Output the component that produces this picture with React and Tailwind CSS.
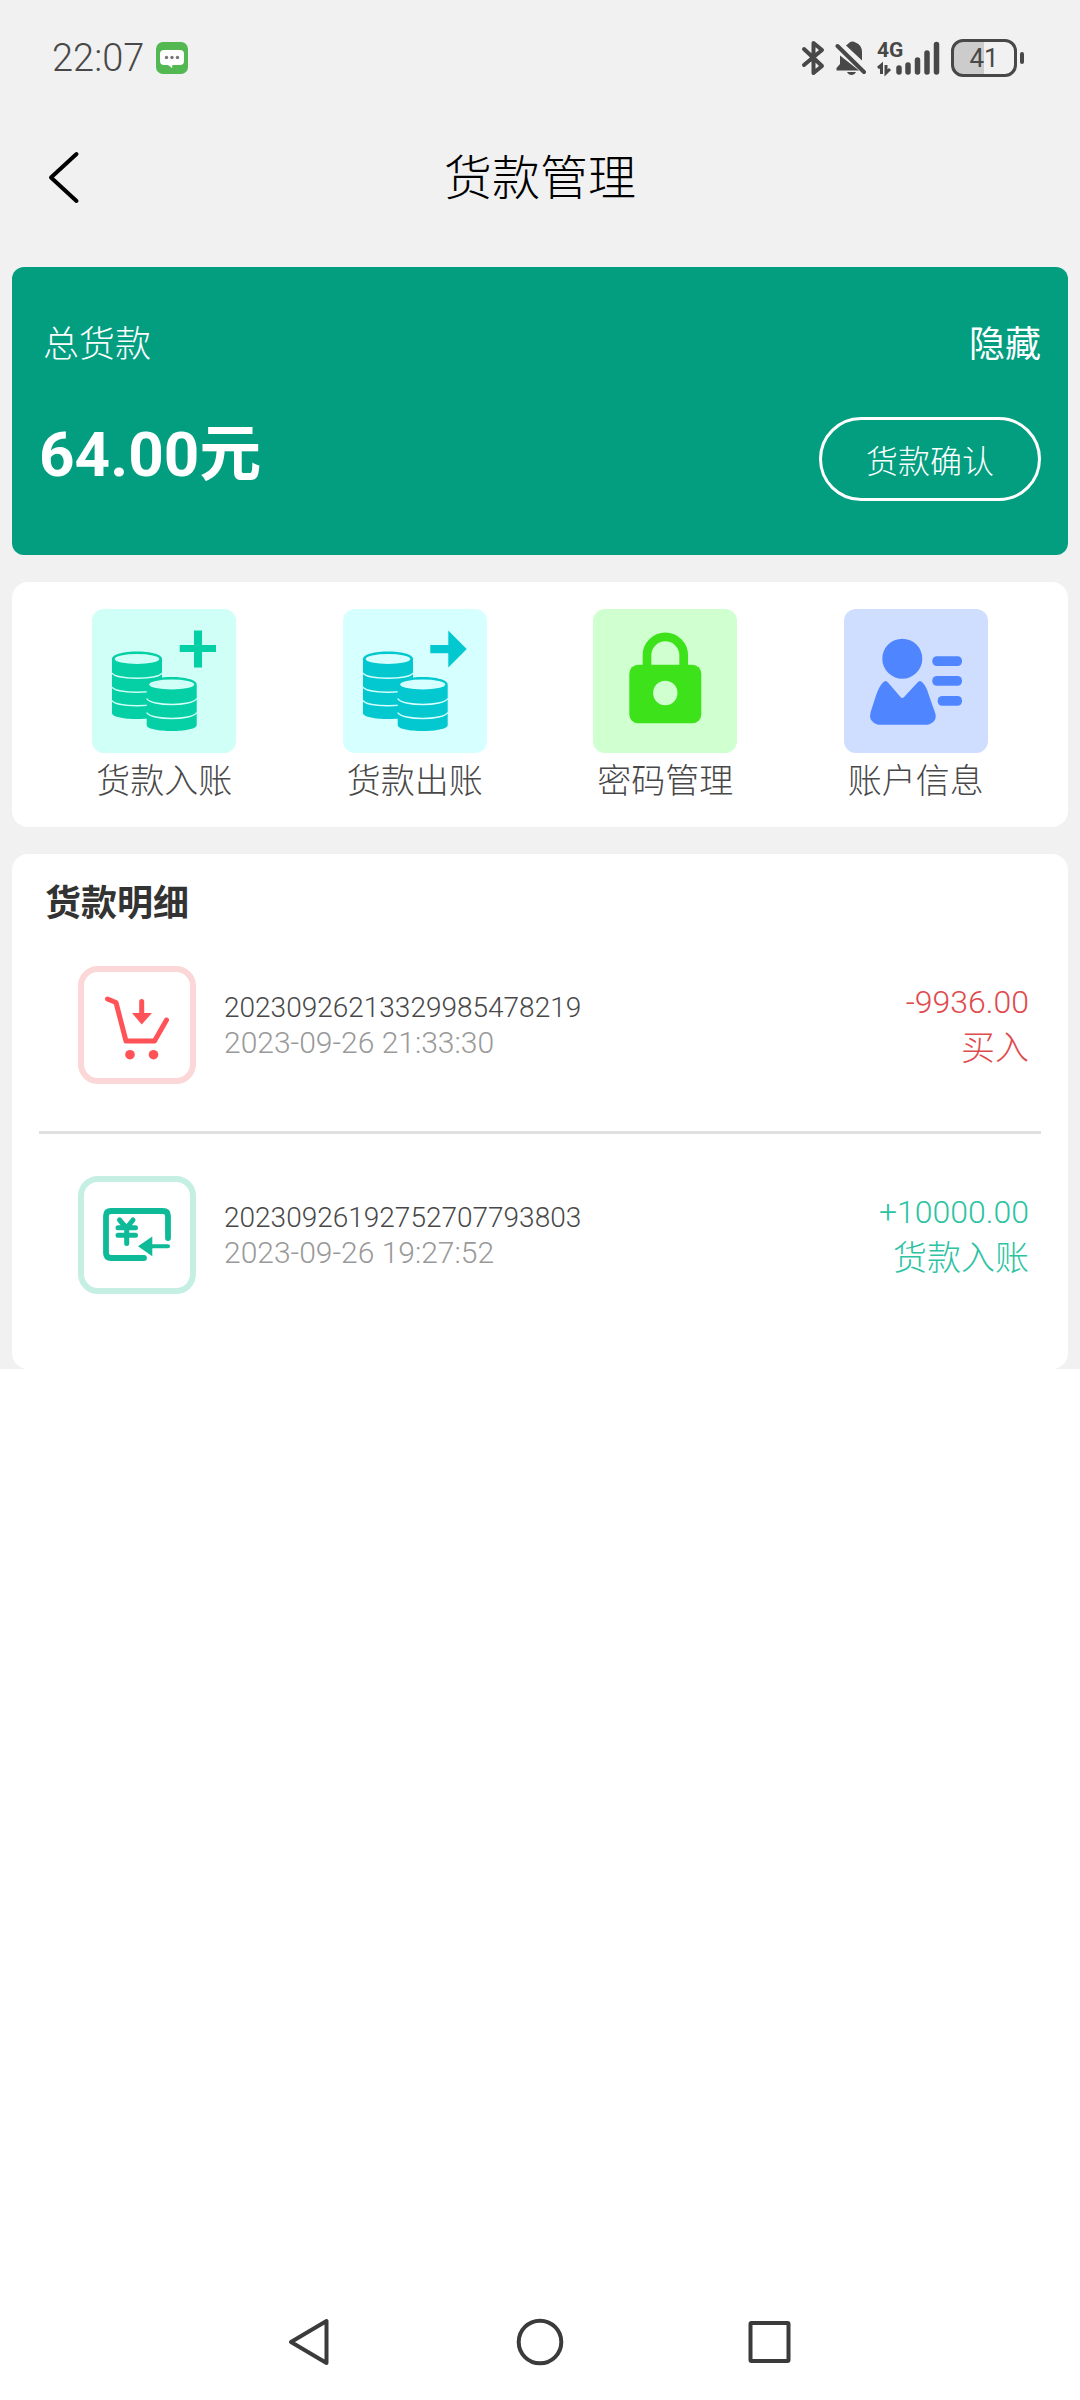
import React, { useState } from 'react'

const StatusBar = () => (
  <div className="flex h-[116px] items-center justify-between pl-[52px] pr-14 text-[#484848]">
    <div className="flex items-center gap-3">
      <span className="font-['Roboto','Noto_Sans_CJK_SC',sans-serif] text-[38px] font-light leading-10">22:07</span>
      <svg width="32" height="32" viewBox="0 0 32 32" aria-hidden="true">
        <rect width="32" height="32" rx="7" fill="#53b752" />
        <path d="M8 8h16q4 0 4 4v7q0 4-4 4H16.500l-.5 3-4-3H8q-4 0-4-4v-7q0-4 4-4z" fill="#fff" />
        <circle cx="10.500" cy="15.500" r="1.700" fill="#777" />
        <circle cx="16" cy="15.500" r="1.700" fill="#777" />
        <circle cx="21.500" cy="15.500" r="1.700" fill="#777" />
      </svg>
    </div>

    <div className="flex items-center gap-2.5">
      <svg width="24" height="36" viewBox="0 0 24 36" fill="none" stroke="currentColor" strokeWidth="4" strokeLinecap="round" strokeLinejoin="round" aria-hidden="true">
        <path d="M3 9l18 17-8.500 7V3L21 10 3 25" />
      </svg>
      <svg width="32" height="36" viewBox="0 0 32 36" aria-hidden="true">
        <path d="M1.500 30.500v-2.500L5 24V15.500L24 30.500z" fill="currentColor" />
        <path d="M11 5.500Q13 4 14.500 2.500q3-2 6 0 6.500 2.500 6.500 9.500v8.500z" fill="currentColor" />
        <path d="M12 32h9q-1.500 3-4.500 3T12 32z" fill="currentColor" />
        <path d="M2.500 6L29 32" stroke="currentColor" strokeWidth="4" strokeLinecap="round" />
      </svg>
      <svg width="64" height="48" viewBox="0 -6 64 48" aria-hidden="true">
        <text x="0" y="17" fontFamily="Roboto, sans-serif" fontSize="21" fontWeight="700" fill="currentColor">4G</text>
        <path d="M1 28l3.500-3v9M9 25v8l4-4" fill="none" stroke="currentColor" strokeWidth="3" />
        <path d="M22 28v4M31 25v7M40.500 20v12M50 13v19M59.500 4.500v27.500" stroke="currentColor" strokeWidth="5.500" strokeLinecap="round" />
      </svg>
      <div className="flex items-center gap-[3px]">
        <div className="flex h-[38px] w-[66px] items-center justify-center rounded-xl border-[3px] border-[#484848] bg-linear-to-r from-[#cccccc] from-50% to-[#f1f1f1] to-50%">
          <span className="font-['Roboto',sans-serif] text-[26px] leading-8">41</span>
        </div>
        <div className="h-3 w-1 rounded-sm bg-[#484848]" />
      </div>
    </div>
  </div>
)

const Header = () => (
  <header className="grid h-[120px] grid-cols-[1fr_auto_1fr] items-center px-10">
    <button type="button" aria-label="返回" className="w-12 text-black">
      <svg width="48" height="60" viewBox="0 0 48 60" fill="none" stroke="currentColor" strokeWidth="4" strokeLinecap="round" strokeLinejoin="round">
        <path d="M36.500 8L11 31.500l25.500 23.500" />
      </svg>
    </button>
    <h1 className="pb-1 text-[48px] font-light leading-[60px] text-black">货款管理</h1>
  </header>
)

const Coins = ({ color, light, children }) => (
  <svg width="144" height="144" viewBox="0 0 144 144" aria-hidden="true">
    <path d="M20 50c0-10 50-10 50 0v54c0 8-50 8-50 0z" fill={color} />
    <ellipse cx="45" cy="50" rx="22.300" ry="5" fill={light} />
    <g fill="none" stroke={light} strokeWidth="1.400">
      <path d="M20 64c4 7 46 7 50 0M20 78c4 7 46 7 50 0M20 91.500c4 7 46 7 50 0" />
    </g>
    <path d="M54.700 75.500c0-10 50-10 50 0V116c0 8-50 8-50 0z" fill={color} />
    <ellipse cx="79.700" cy="75.500" rx="22.500" ry="5" fill={light} />
    <g fill="none" stroke={light} strokeWidth="1.400">
      <path d="M54.700 89.500c4 8 46 8 50 0M54.700 103.500c4 8 46 8 50 0" />
    </g>
    <g fill={color}>{children}</g>
  </svg>
)

const DepositIcon = () => (
  <Coins color="#05cfa4" light="#cffff7">
    <path d="M102 21.500h8v14.500h14v7h-14v15.500h-8V43H87.700v-7H102z" />
  </Coins>
)

const WithdrawIcon = () => (
  <Coins color="#04c8d0" light="#d6ffff">
    <path d="M87.300 36h18V21.500L123.700 40l-18.400 18.500V44.300h-18z" />
  </Coins>
)

const LockIcon = () => (
  <svg width="144" height="144" viewBox="0 0 144 144" aria-hidden="true">
    <path d="M54 60V46.300a18.300 18.300 0 0 1 36.700 0V60" fill="none" stroke="#3de21a" strokeWidth="8.700" />
    <rect x="36.300" y="55.700" width="72" height="58.600" rx="9" fill="#3de21a" />
    <circle cx="72.300" cy="84" r="12.200" fill="#d0ffd0" />
  </svg>
)

const AccountIcon = () => (
  <svg width="144" height="144" viewBox="0 0 144 144" fill="#4f86ff" aria-hidden="true">
    <circle cx="58.300" cy="49.700" r="20" />
    <path d="M39 73.500q2.500-3 5 0L56.500 88q1.800 2 3.600 0L73.500 73.500q2.500-3 5 0 4 4 6.500 13l6 17q3 9-7 12.200H34q-10-3-7.500-12.200L32 86.500q3-9 7-13z" />
    <rect x="88.300" y="47.300" width="29.700" height="9.700" rx="4.500" />
    <rect x="88.300" y="67" width="29.700" height="9.700" rx="4.500" />
    <rect x="93.700" y="87" width="24.300" height="9.700" rx="4.500" />
  </svg>
)

const CartIcon = () => (
  <svg width="106" height="106" viewBox="6 6 106 106" aria-hidden="true">
    <path d="M29.500 33l8.500 3.500L48 75h28.500L88.500 54M63.700 35.500V50" fill="none" stroke="#ff5358" strokeWidth="5" strokeLinecap="round" strokeLinejoin="round" />
    <path d="M54 47h20L63.700 58.500z" fill="#ff5358" />
    <circle cx="52" cy="88.700" r="4.800" fill="#ff5358" />
    <circle cx="75.500" cy="88.700" r="4.800" fill="#ff5358" />
  </svg>
)

const IncomeIcon = () => (
  <svg width="106" height="106" viewBox="6 6 106 106" aria-hidden="true">
    <g fill="none" stroke="#0fba98" strokeLinecap="round" strokeLinejoin="round">
      <path d="M66 82H33q-5 0-5-5V40q0-5 5-5h52q5 0 5 5v22" strokeWidth="5.800" />
      <path d="M41.500 44l7 8 6.500-8M40 51.700h17.500M40 59.300h17.500M48.700 52v15.500" strokeWidth="5" />
      <path d="M74 70.300h16" strokeWidth="4" />
    </g>
    <path d="M60 70.300l14.300-9.800v19.800z" fill="#0fba98" />
  </svg>
)

const acciones = [
  { label: '货款入账', bg: 'bg-[#cffff7]', Icon: DepositIcon },
  { label: '货款出账', bg: 'bg-[#d6ffff]', Icon: WithdrawIcon },
  { label: '密码管理', bg: 'bg-[#d0ffd0]', Icon: LockIcon },
  { label: '账户信息', bg: 'bg-[#cfddff]', Icon: AccountIcon }
]

const movimientos = [
  {
    id: '20230926213329985478219',
    fecha: '2023-09-26 21:33:30',
    monto: '-9936.00',
    tipo: '买入',
    color: 'text-[#e04a4d]',
    border: 'border-[#fbd7d7]',
    Icon: CartIcon
  },
  {
    id: '20230926192752707793803',
    fecha: '2023-09-26 19:27:52',
    monto: '+10000.00',
    tipo: '货款入账',
    color: 'text-[#2cc3a3]',
    border: 'border-[#c6efe4]',
    Icon: IncomeIcon
  }
]

const NavBar = () => (
  <nav className="mx-auto mt-auto grid h-[117px] w-[64%] grid-cols-3 place-items-center text-[#3b3b3b]">
    <button type="button" aria-label="后退">
      <svg width="48" height="52" viewBox="0 0 48 52" fill="none" stroke="currentColor" strokeWidth="4" strokeLinejoin="round">
        <path d="M5 26L40.500 5v42z" />
      </svg>
    </button>
    <button type="button" aria-label="主页">
      <svg width="48" height="52" viewBox="0 0 48 52" fill="none" stroke="currentColor" strokeWidth="4">
        <circle cx="24" cy="26" r="21.300" />
      </svg>
    </button>
    <button type="button" aria-label="最近任务">
      <svg width="48" height="52" viewBox="0 0 48 52" fill="none" stroke="currentColor" strokeWidth="4" strokeLinejoin="round">
        <rect x="4.500" y="7" width="38" height="38" rx="1" />
      </svg>
    </button>
  </nav>
)

const App = () => {
  const [oculto, setOculto] = useState(false)

  return (
    <div className="flex min-h-screen flex-col bg-white font-['Noto_Sans_CJK_SC',sans-serif]">
      <div className="bg-[#f1f1f1]">
        <StatusBar />
        <Header />

        <main className="flex flex-col gap-[27px] px-3 pt-[31px]">
          <section className="rounded-xl bg-[#029e7f] px-[27px] pb-[54px] pt-[50px] text-white">
            <div className="flex items-center justify-between pl-1 text-[36px] leading-[48px]">
              <h2 className="font-light">总货款</h2>
              <button type="button" onClick={() => setOculto(!oculto)}>{oculto ? '显示' : '隐藏'}</button>
            </div>
            <div className="mt-[52px] flex items-center justify-between">
              <p className="pb-2 font-['Roboto','Noto_Sans_CJK_SC',sans-serif] text-[62px] font-bold leading-[72px]">{oculto ? '****' : '64.00元'}</p>
              <button type="button" className="h-[84px] w-[222px] rounded-full border-[3px] border-white text-[32px] font-light leading-10">货款确认</button>
            </div>
          </section>

          <section className="grid grid-cols-4 rounded-2xl bg-white px-[27px] pb-6 pt-[27px]">
            {acciones.map(({ label, bg, Icon }) => (
              <button key={label} type="button" className="flex flex-col items-center gap-0.5">
                <span className={`block rounded-xl ${bg}`}><Icon /></span>
                <span className="text-[34px] font-light leading-[48px] text-[#484848]">{label}</span>
              </button>
            ))}
          </section>

          <section className="rounded-2xl bg-white px-[27px] pb-7 pt-[22px]">
            <h2 className="pl-1.5 text-[36px] font-bold leading-[48px] text-[#333]">货款明细</h2>
            <ul className="divide-y-[3px] divide-[#e0e0e0]">
              {movimientos.map(({ id, fecha, monto, tipo, color, border, Icon }) => (
                <li key={id} className="flex items-center gap-7 pb-[47px] pl-[39px] pr-3 pt-[42px]">
                  <div className={`size-[118px] shrink-0 rounded-[20px] border-[6px] ${border}`}><Icon /></div>
                  <div className="flex-1 font-['Roboto',sans-serif] font-light leading-[35px]">
                    <p className="text-[28px] leading-[35px] text-[#484848]">{id}</p>
                    <p className="text-[30px] leading-[35px] text-[#999]">{fecha}</p>
                  </div>
                  <div className={`pt-1 text-right font-light ${color}`}>
                    <p className="font-['Roboto',sans-serif] text-[32px] leading-[38px]">{monto}</p>
                    <p className="text-[34px] leading-[50px]">{tipo}</p>
                  </div>
                </li>
              ))}
            </ul>
          </section>
        </main>
      </div>

      <NavBar />
    </div>
  )
}

export default App
